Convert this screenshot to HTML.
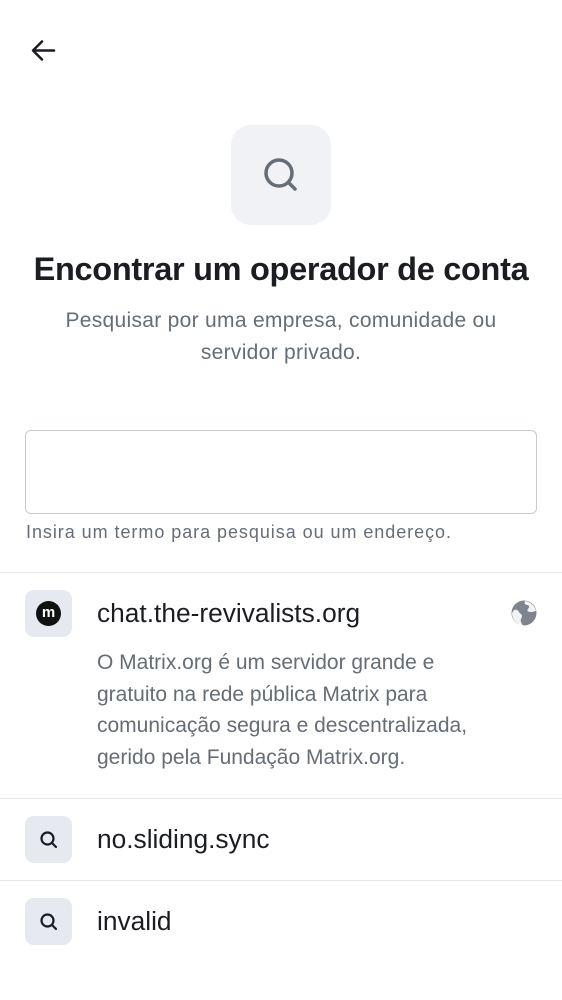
<!DOCTYPE html>
<html><head><meta charset="utf-8"><style>
*{margin:0;padding:0;box-sizing:border-box}
body{width:562px;height:1000px;background:#fff;font-family:"Liberation Sans",sans-serif;position:relative;overflow:hidden;color:#1b1d22}
.abs{position:absolute}
.title{left:0;width:562px;top:251px;text-align:center;font-size:32.5px;font-weight:bold;letter-spacing:-0.3px}
.sub{left:20px;width:522px;top:305px;text-align:center;font-size:21px;letter-spacing:0.3px;line-height:32px;color:#656d77}
.input{left:25px;top:430px;width:512px;height:84px;border:1.5px solid #c6cad1;border-radius:6px}
.hint{left:26px;top:522px;font-size:18px;color:#656d77;letter-spacing:0.95px}
.hr{left:0;width:562px;height:1px;background:#e6e8ec}
.ib{left:25px;width:47px;height:47px;border-radius:9px;background:#e6e9f0;display:flex;align-items:center;justify-content:center}
.name{left:97px;font-size:26.3px;color:#1b1d22}
.desc{left:97px;top:647px;width:440px;font-size:21px;line-height:31.5px;color:#656d77}
</style></head><body>
<svg class="abs" style="left:29px;top:37px" width="28" height="28" viewBox="0 0 28 28"><path d="M25 13.5H5M13 4.5L4 13.5L13 22.5" fill="none" stroke="#1b1d22" stroke-width="2.6" stroke-linecap="round" stroke-linejoin="round"/></svg>
<div class="abs" style="left:231px;top:125px;width:100px;height:100px;border-radius:20px;background:#f0f2f5"></div>
<svg class="abs" style="left:259px;top:153px" width="44" height="44" viewBox="0 0 44 44"><circle cx="20" cy="20" r="13" fill="none" stroke="#656d77" stroke-width="3.5"/><path d="M29.5 29.5L36 36" stroke="#656d77" stroke-width="3.5" stroke-linecap="round"/></svg>
<div class="abs title">Encontrar um operador de conta</div>
<div class="abs sub">Pesquisar por uma empresa, comunidade ou<br>servidor privado.</div>
<div class="abs input"></div>
<div class="abs hint">Insira um termo para pesquisa ou um endereço.</div>
<div class="abs hr" style="top:572px"></div>
<div class="abs ib" style="top:590px"><div style="width:25px;height:25px;border-radius:50%;background:#111;color:#fff;font-size:15px;font-weight:bold;text-align:center;line-height:23px">m</div></div>
<div class="abs name" style="top:598px">chat.the-revivalists.org</div>
<svg class="abs" style="left:511px;top:600px" width="26" height="26" viewBox="0 0 26 26"><circle cx="13" cy="13" r="12.5" fill="#7f858f"/><path d="M3 10c2-1 4 0 5 2s3 2 3 4-2 3-1 6 2 3 2 3L13 26A13 13 0 0 1 1 13ZM14 1c-1 2 0 4 2 4s3 2 1 4 1 3 3 3 4-1 5-1A13 13 0 0 0 14 1Z" fill="#fff" opacity="0.9"/></svg>
<div class="abs desc">O Matrix.org é um servidor grande e<br>gratuito na rede pública Matrix para<br>comunicação segura e descentralizada,<br>gerido pela Fundação Matrix.org.</div>
<div class="abs hr" style="top:798px"></div>
<div class="abs ib" style="top:816px"><svg width="22" height="22" viewBox="0 0 22 22"><circle cx="9.5" cy="9.5" r="6" fill="none" stroke="#1b1d22" stroke-width="2.2"/><path d="M14 14l4 4" stroke="#1b1d22" stroke-width="2.2" stroke-linecap="round"/></svg></div>
<div class="abs name" style="top:824px">no.sliding.sync</div>
<div class="abs hr" style="top:880px"></div>
<div class="abs ib" style="top:898px"><svg width="22" height="22" viewBox="0 0 22 22"><circle cx="9.5" cy="9.5" r="6" fill="none" stroke="#1b1d22" stroke-width="2.2"/><path d="M14 14l4 4" stroke="#1b1d22" stroke-width="2.2" stroke-linecap="round"/></svg></div>
<div class="abs name" style="top:906px">invalid</div>
</body></html>
